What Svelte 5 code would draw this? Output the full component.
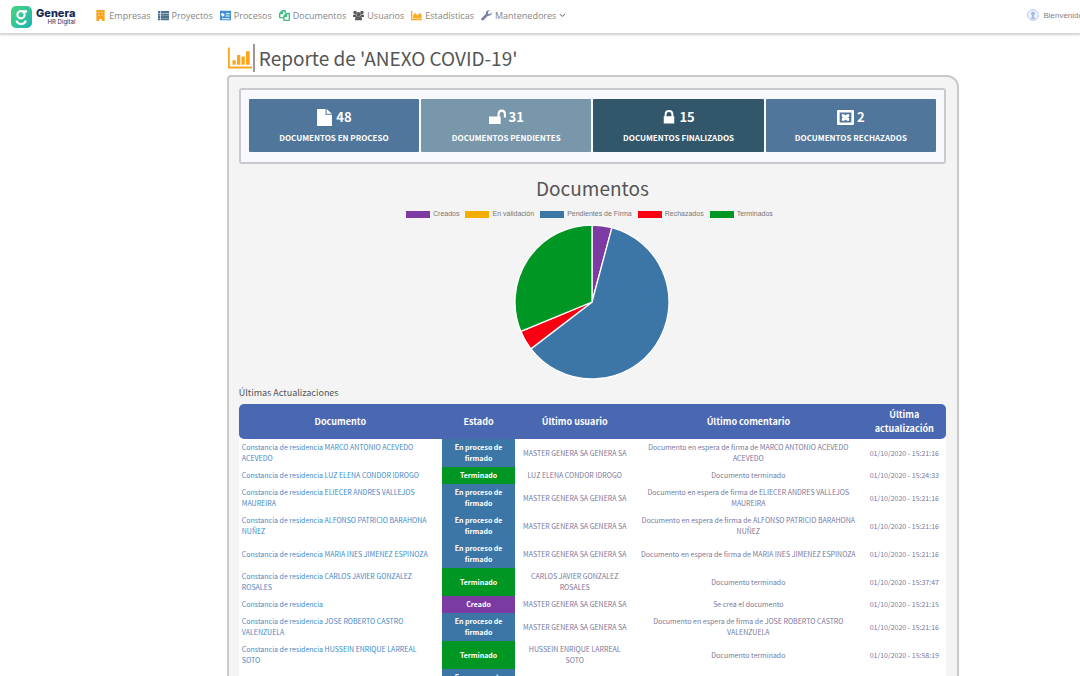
<script>
  const menu = [
    { icon: 'building', label: 'Empresas', color: '#f9a51a' },
    { icon: 'list', label: 'Proyectos', color: '#4d7390' },
    { icon: 'process', label: 'Procesos', color: '#3f8fd6' },
    { icon: 'copy', label: 'Documentos', color: '#3fbf86' },
    { icon: 'users', label: 'Usuarios', color: '#5c5c5c' },
    { icon: 'chart', label: 'Estadísticas', color: '#fbab22' },
    { icon: 'wrench', label: 'Mantenedores', color: '#7a7fa8', dropdown: true }
  ];

  const tiles = [
    { icon: 'file', count: 48, label: 'Documentos en proceso', color: '#50769b' },
    { icon: 'unlock', count: 31, label: 'Documentos pendientes', color: '#7997aa' },
    { icon: 'lock', count: 15, label: 'Documentos finalizados', color: '#32566a' },
    { icon: 'rejected', count: 2, label: 'Documentos rechazados', color: '#50769b' }
  ];

  const series = [
    { label: 'Creados', value: 2, color: '#7b3ba3' },
    { label: 'En validación', value: 0, color: '#f5ad00' },
    { label: 'Pendientes de Firma', value: 29, color: '#3c76a6' },
    { label: 'Rechazados', value: 2, color: '#f80012' },
    { label: 'Terminados', value: 15, color: '#009623' }
  ];

  const master = 'MASTER GENERA SA GENERA SA';

  function pending(name, date) {
    return { name, state: 'proceso', user: master, comment: `Documento en espera de firma de ${name}`, date };
  }

  function finished(name, date) {
    return { name, state: 'terminado', user: name, comment: 'Documento terminado', date };
  }

  const rows = [
    pending('MARCO ANTONIO ACEVEDO ACEVEDO', '01/10/2020 - 15:21:16'),
    finished('LUZ ELENA CONDOR IDROGO', '01/10/2020 - 15:24:33'),
    pending('ELIECER ANDRES VALLEJOS MAUREIRA', '01/10/2020 - 15:21:16'),
    pending('ALFONSO PATRICIO BARAHONA NUÑEZ', '01/10/2020 - 15:21:16'),
    pending('MARIA INES JIMENEZ ESPINOZA', '01/10/2020 - 15:21:16'),
    finished('CARLOS JAVIER GONZALEZ ROSALES', '01/10/2020 - 15:37:47'),
    { name: '', state: 'creado', user: master, comment: 'Se crea el documento', date: '01/10/2020 - 15:21:15' },
    pending('JOSE ROBERTO CASTRO VALENZUELA', '01/10/2020 - 15:21:16'),
    finished('HUSSEIN ENRIQUE LARREAL SOTO', '01/10/2020 - 15:58:19'),
    pending('ALEJANDRO RAFAEL HERRERA', '01/10/2020 - 15:21:16')
  ];

  const states = {
    proceso: 'En proceso de firmado',
    terminado: 'Terminado',
    creado: 'Creado'
  };

  // Turn the values into pie slices, clockwise from the top
  function buildSlices(items, r) {
    const total = items.reduce((sum, s) => sum + s.value, 0);
    let angle = 0;
    return items.filter(s => s.value > 0).map(s => {
      const start = angle;
      angle += (s.value / total) * Math.PI * 2;
      const large = angle - start > Math.PI ? 1 : 0;
      const x1 = r * Math.sin(start);
      const y1 = -r * Math.cos(start);
      const x2 = r * Math.sin(angle);
      const y2 = -r * Math.cos(angle);
      return { color: s.color, d: `M0 0L${x1} ${y1}A${r} ${r} 0 ${large} 1 ${x2} ${y2}Z` };
    });
  }

  const slices = buildSlices(series, 77);
</script>

{#snippet icon(name)}
  <svg class="icon {name}" viewBox="0 0 16 16" fill="currentColor" aria-hidden="true">
    {#if name === 'building'}
      <path fill-rule="evenodd" d="M2 0h12v16h-4v-3H6v3H2zM5 3v1.500h1.500V3zM9.500 3v1.500H11V3zM5 7v1.500h1.500V7zM9.500 7v1.500H11V7z" />
    {:else if name === 'list'}
      <path d="M0 1.500h3v3H0zM4 1.500h12v3H4zM0 5h3v3H0zM4 5h12v3H4zM0 8.500h3v3H0zM4 8.500h12v3H4zM0 12h3v3H0zM4 12h12v3H4z" />
    {:else if name === 'process'}
      <path fill-rule="evenodd" d="M0 1h16v14H0zM1.500 5v3h2v2.500L7 7 3.500 4v1zM9 4.500V6h5V4.500zM8 8v1.500h6V8zM3 12v1.300h11V12z" />
    {:else if name === 'copy'}
      <g fill="none" stroke="currentColor" stroke-width="2" stroke-linejoin="round">
        <path d="M6 11H1V5l4-4h4v4M5 1v4H1" />
        <path d="M7 15V9l4-4h4v10zM11 5v4H7" />
      </g>
    {:else if name === 'users'}
      <circle cx="3" cy="3.500" r="2.500" />
      <circle cx="13" cy="3.500" r="2.500" />
      <circle cx="8" cy="6" r="3.200" />
      <path d="M0 10V7.500Q1 6 3 6.500q1 0 1.500 0Q4.500 8 5.500 9L3.500 10zM16 10V7.500Q15 6 13 6.500q-1 0-1.500 0Q11.500 8 10.500 9l2 1zM3 15v-2.500Q3.500 9 5.500 9h5q2 0 2.500 3.500V15z" />
    {:else if name === 'chart'}
      <path d="M0 1h2v12h14v2H0zM3 12.500V8l3-4 3 4 4-4 2.500 3v5.500z" />
    {:else if name === 'bars'}
      <path d="M0 1h1.200v12.600H16V15H0zM3 9.500h2.200v3H3zM6 6h2.200v6.500H6zM9 7h2.200v5.500H9zM12 3.500h2.500v9H12z" />
    {:else if name === 'wrench'}
      <path d="M15.500 3.500 13 6l-2.500-.5L10 3l2.500-2.500Q8-.5 7.200 3.500q-.2 1 .1 2L.8 12q-1 1.500 0 2.700 1.300 1.300 2.800.2l6.500-6.600q2.500.7 4.400-1 1.500-1.500 1-3.800z" />
    {:else if name === 'chevron'}
      <path fill="none" stroke="currentColor" stroke-width="2.500" d="m2 5 6 5 6-5" />
    {:else if name === 'user'}
      <circle cx="8" cy="8" r="7.300" fill="#eef3fc" stroke="currentColor" />
      <circle cx="8" cy="6" r="2.600" />
      <path d="M6.500 8h3v3l2 1.500q-3.500 2.500-7 0l2-1.500z" />
    {:else if name === 'file'}
      <path d="M1 0h8v5.500h6V16H1zM10 0l5 4.500h-5z" />
    {:else if name === 'unlock'}
      <path d="M0 7h8V5q0-4.500 4-4.500T16 5v3h-2V5q0-2.500-2-2.500T10 5v2h1v7H0z" />
    {:else if name === 'lock'}
      <path fill-rule="evenodd" d="M2 7h1V5q0-5 5-5t5 5v2h1v8.500H2zM5.200 7h5.600V5q0-2.800-2.800-2.800T5.200 5z" />
    {:else if name === 'rejected'}
      <path fill-rule="evenodd" d="M1 1h14q1 0 1 1v12q0 1-1 1H1q-1 0-1-1V2q0-1 1-1zM2.500 3.300v9.400h11V3.300z" />
      <path d="M4.500 5h2.300L8 6.200 9.200 5h2.300v2l-1 1 1 1v2H9.200L8 9.800 6.800 11H4.500V9l1-1-1-1z" />
    {/if}
  </svg>
{/snippet}

<header class="navbar">
  <a class="brand" href="#inicio">
    <svg class="logo" viewBox="0 0 22 22" aria-hidden="true">
      <defs>
        <linearGradient id="brand-fill" x1="0" y1="0" x2="1" y2="1">
          <stop offset="0" stop-color="#48d67c" />
          <stop offset="1" stop-color="#1fb4b4" />
        </linearGradient>
      </defs>
      <rect width="21" height="22" rx="5" fill="url(#brand-fill)" />
      <g fill="none" stroke="#fff" stroke-width="2.200">
        <circle cx="10" cy="8.700" r="3.600" />
        <path d="M12 5.400h4M5.500 14.500q1 3.500 4.700 3.500t4.500-3.500" />
      </g>
    </svg>
    <span class="brand-text">
      <strong>Genera</strong>
      <small>HR Digital</small>
    </span>
  </a>

  <nav>
    {#each menu as item}
      <a href="#{item.icon}">
        <span class="menu-icon" style="color: {item.color}">{@render icon(item.icon)}</span>
        {item.label}
        {#if item.dropdown}{@render icon('chevron')}{/if}
      </a>
    {/each}
  </nav>

  <div class="welcome">
    {@render icon('user')}
    <span>Bienvenido</span>
  </div>
</header>

<main>
  <h1>
    {@render icon('bars')}
    <span>Reporte de 'ANEXO COVID-19'</span>
  </h1>

  <section class="panel">
    <div class="tiles">
      {#each tiles as tile}
        <div class="tile" style="background: {tile.color}">
          <div class="count">{@render icon(tile.icon)}{tile.count}</div>
          <div class="tile-label">{tile.label}</div>
        </div>
      {/each}
    </div>

    <h2>Documentos</h2>
    <ul class="legend">
      {#each series as s}
        <li><span class="swatch" style="background: {s.color}"></span>{s.label}</li>
      {/each}
    </ul>
    <svg class="pie" viewBox="-78 -78 156 156" role="img" aria-label="Documentos">
      {#each slices as slice}
        <path d={slice.d} fill={slice.color} stroke="#fff" stroke-width="1.300" />
      {/each}
    </svg>

    <h3>Últimas Actualizaciones</h3>
    <table>
      <colgroup>
        <col class="col-doc" />
        <col class="col-state" />
        <col class="col-user" />
        <col class="col-comment" />
        <col class="col-date" />
      </colgroup>
      <thead>
        <tr>
          <th>Documento</th>
          <th>Estado</th>
          <th>Último usuario</th>
          <th>Último comentario</th>
          <th>Última actualización</th>
        </tr>
      </thead>
      <tbody>
        {#each rows as row}
          <tr>
            <td class="doc"><a href="#documento">Constancia de residencia {row.name}</a></td>
            <td class="state {row.state}">{states[row.state]}</td>
            <td class="user-name">{row.user}</td>
            <td>{row.comment}</td>
            <td class="date">{row.date}</td>
          </tr>
        {/each}
      </tbody>
    </table>
  </section>
</main>

<style>
  :global(body) {
    background: #fff;
    font-family: "Noto Sans CJK SC", "Open Sans", sans-serif;
    color: #555;
  }

  a {
    text-decoration: none;
    color: inherit;
  }

  .icon {
    width: 11px;
    height: 11px;
    flex: none;
  }

  .navbar {
    display: flex;
    align-items: center;
    height: 33px;
    padding-left: 11px;
    border-bottom: 1px solid #d6d6d6;
    box-shadow: 0 1px 2px rgba(0, 0, 0, 0.2);
    font-family: "Open Sans", sans-serif;
    font-size: 9px;
    color: #858585;
    overflow: hidden;
    white-space: nowrap;
  }

  .brand {
    display: flex;
    align-items: center;
    gap: 3px;
    color: #14285a;
    font-family: Inter, sans-serif;
  }

  .logo {
    width: 22px;
    height: 22px;
  }

  .brand-text {
    display: flex;
    flex-direction: column;
    align-items: flex-end;
  }

  .brand-text strong {
    font-size: 11px;
    line-height: 11px;
    font-weight: 800;
  }

  .brand-text small {
    font-size: 6px;
    line-height: 6px;
  }

  nav {
    display: flex;
    gap: 7px;
    padding: 0 0 3px 20px;
  }

  nav a {
    display: flex;
    align-items: center;
    gap: 3px;
  }

  .menu-icon {
    display: flex;
  }

  .chevron {
    width: 7px;
    height: 7px;
  }

  .welcome {
    display: flex;
    align-items: center;
    gap: 4px;
    margin: 0 -3px 0 auto;
    padding-bottom: 3px;
    font-family: "Liberation Sans", sans-serif;
    font-size: 8px;
  }

  .user {
    width: 12px;
    height: 12px;
    color: #a9bde4;
  }

  main {
    padding: 10px 11.200% 0 21%;
  }

  h1 {
    display: flex;
    align-items: center;
    margin: 0;
    font-size: 19px;
    line-height: 28px;
    font-weight: 400;
  }

  h1 span {
    padding-left: 4px;
    border-left: 2px solid #999;
  }

  .bars {
    width: 26px;
    height: 24px;
    color: #fba61c;
  }

  .panel {
    margin-top: 3px;
    padding: 11px 11px 11px 10px;
    border: 2px solid #c9c9c9;
    border-radius: 4px 12px 0 0;
    background: #f4f4f4;
  }

  .tiles {
    display: grid;
    grid-template-columns: repeat(4, 1fr);
    gap: 2px;
    padding: 9px 8px 10px;
    border: 2px solid #c9c9ce;
    border-radius: 3px;
    background: #f8f9ff;
  }

  .tile {
    padding: 7px 0 4px;
    border-radius: 1px;
    color: #fff;
    font-weight: 700;
    text-align: center;
  }

  .count {
    display: flex;
    align-items: center;
    justify-content: center;
    gap: 3px;
    font-size: 13px;
    line-height: 22px;
  }

  .count .icon {
    width: 17px;
    height: 17px;
  }

  .count .lock {
    width: 14px;
    height: 14px;
  }

  .tile-label {
    font-size: 8px;
    line-height: 20px;
    text-transform: uppercase;
  }

  h2 {
    margin: 10px 0 0;
    font-size: 19px;
    line-height: 28px;
    font-weight: 400;
    text-align: center;
  }

  .legend {
    display: flex;
    justify-content: center;
    gap: 6px;
    margin: 8px 0 6px;
    padding: 0 6px 0 0;
    list-style: none;
    font-family: "Liberation Sans", sans-serif;
    font-size: 7px;
    line-height: 8px;
    color: #777;
  }

  .legend li {
    display: flex;
    align-items: center;
    gap: 3px;
  }

  .swatch {
    width: 24px;
    height: 7px;
  }

  .pie {
    display: block;
    width: 156px;
    margin: 0 auto;
  }

  h3 {
    margin: 6px 0 4px;
    font-size: 9px;
    line-height: 14px;
    font-weight: 400;
  }

  table {
    width: 100%;
    table-layout: fixed;
    border-collapse: separate;
    border-spacing: 0;
    background: #fff;
    border-radius: 5px;
    font-size: 7px;
    line-height: 11px;
    color: #77779a;
    text-align: center;
  }

  .col-doc {
    width: 28.700%;
  }

  .col-state {
    width: 10.400%;
  }

  .col-user {
    width: 16.800%;
  }

  .col-comment {
    width: 32.300%;
  }

  th {
    padding: 4px 3px 3px;
    background: #4a67b1;
    color: #fff;
    font-size: 9px;
    line-height: 14px;
    font-weight: 700;
  }

  th:first-child {
    border-radius: 5px 0 0 5px;
  }

  th:last-child {
    border-radius: 0 5px 5px 0;
  }

  td {
    padding: 3px;
  }

  .doc {
    padding-right: 10px;
    text-align: left;
    color: #4389c4;
  }

  .state {
    padding: 3px 8px;
    color: #fff;
    font-weight: 700;
  }

  .user-name {
    padding: 3px 6px;
  }

  .proceso {
    background: #3c76a6;
  }

  .terminado {
    background: #009623;
  }

  .creado {
    background: #7b3ba3;
  }

  .date {
    white-space: nowrap;
  }
</style>
